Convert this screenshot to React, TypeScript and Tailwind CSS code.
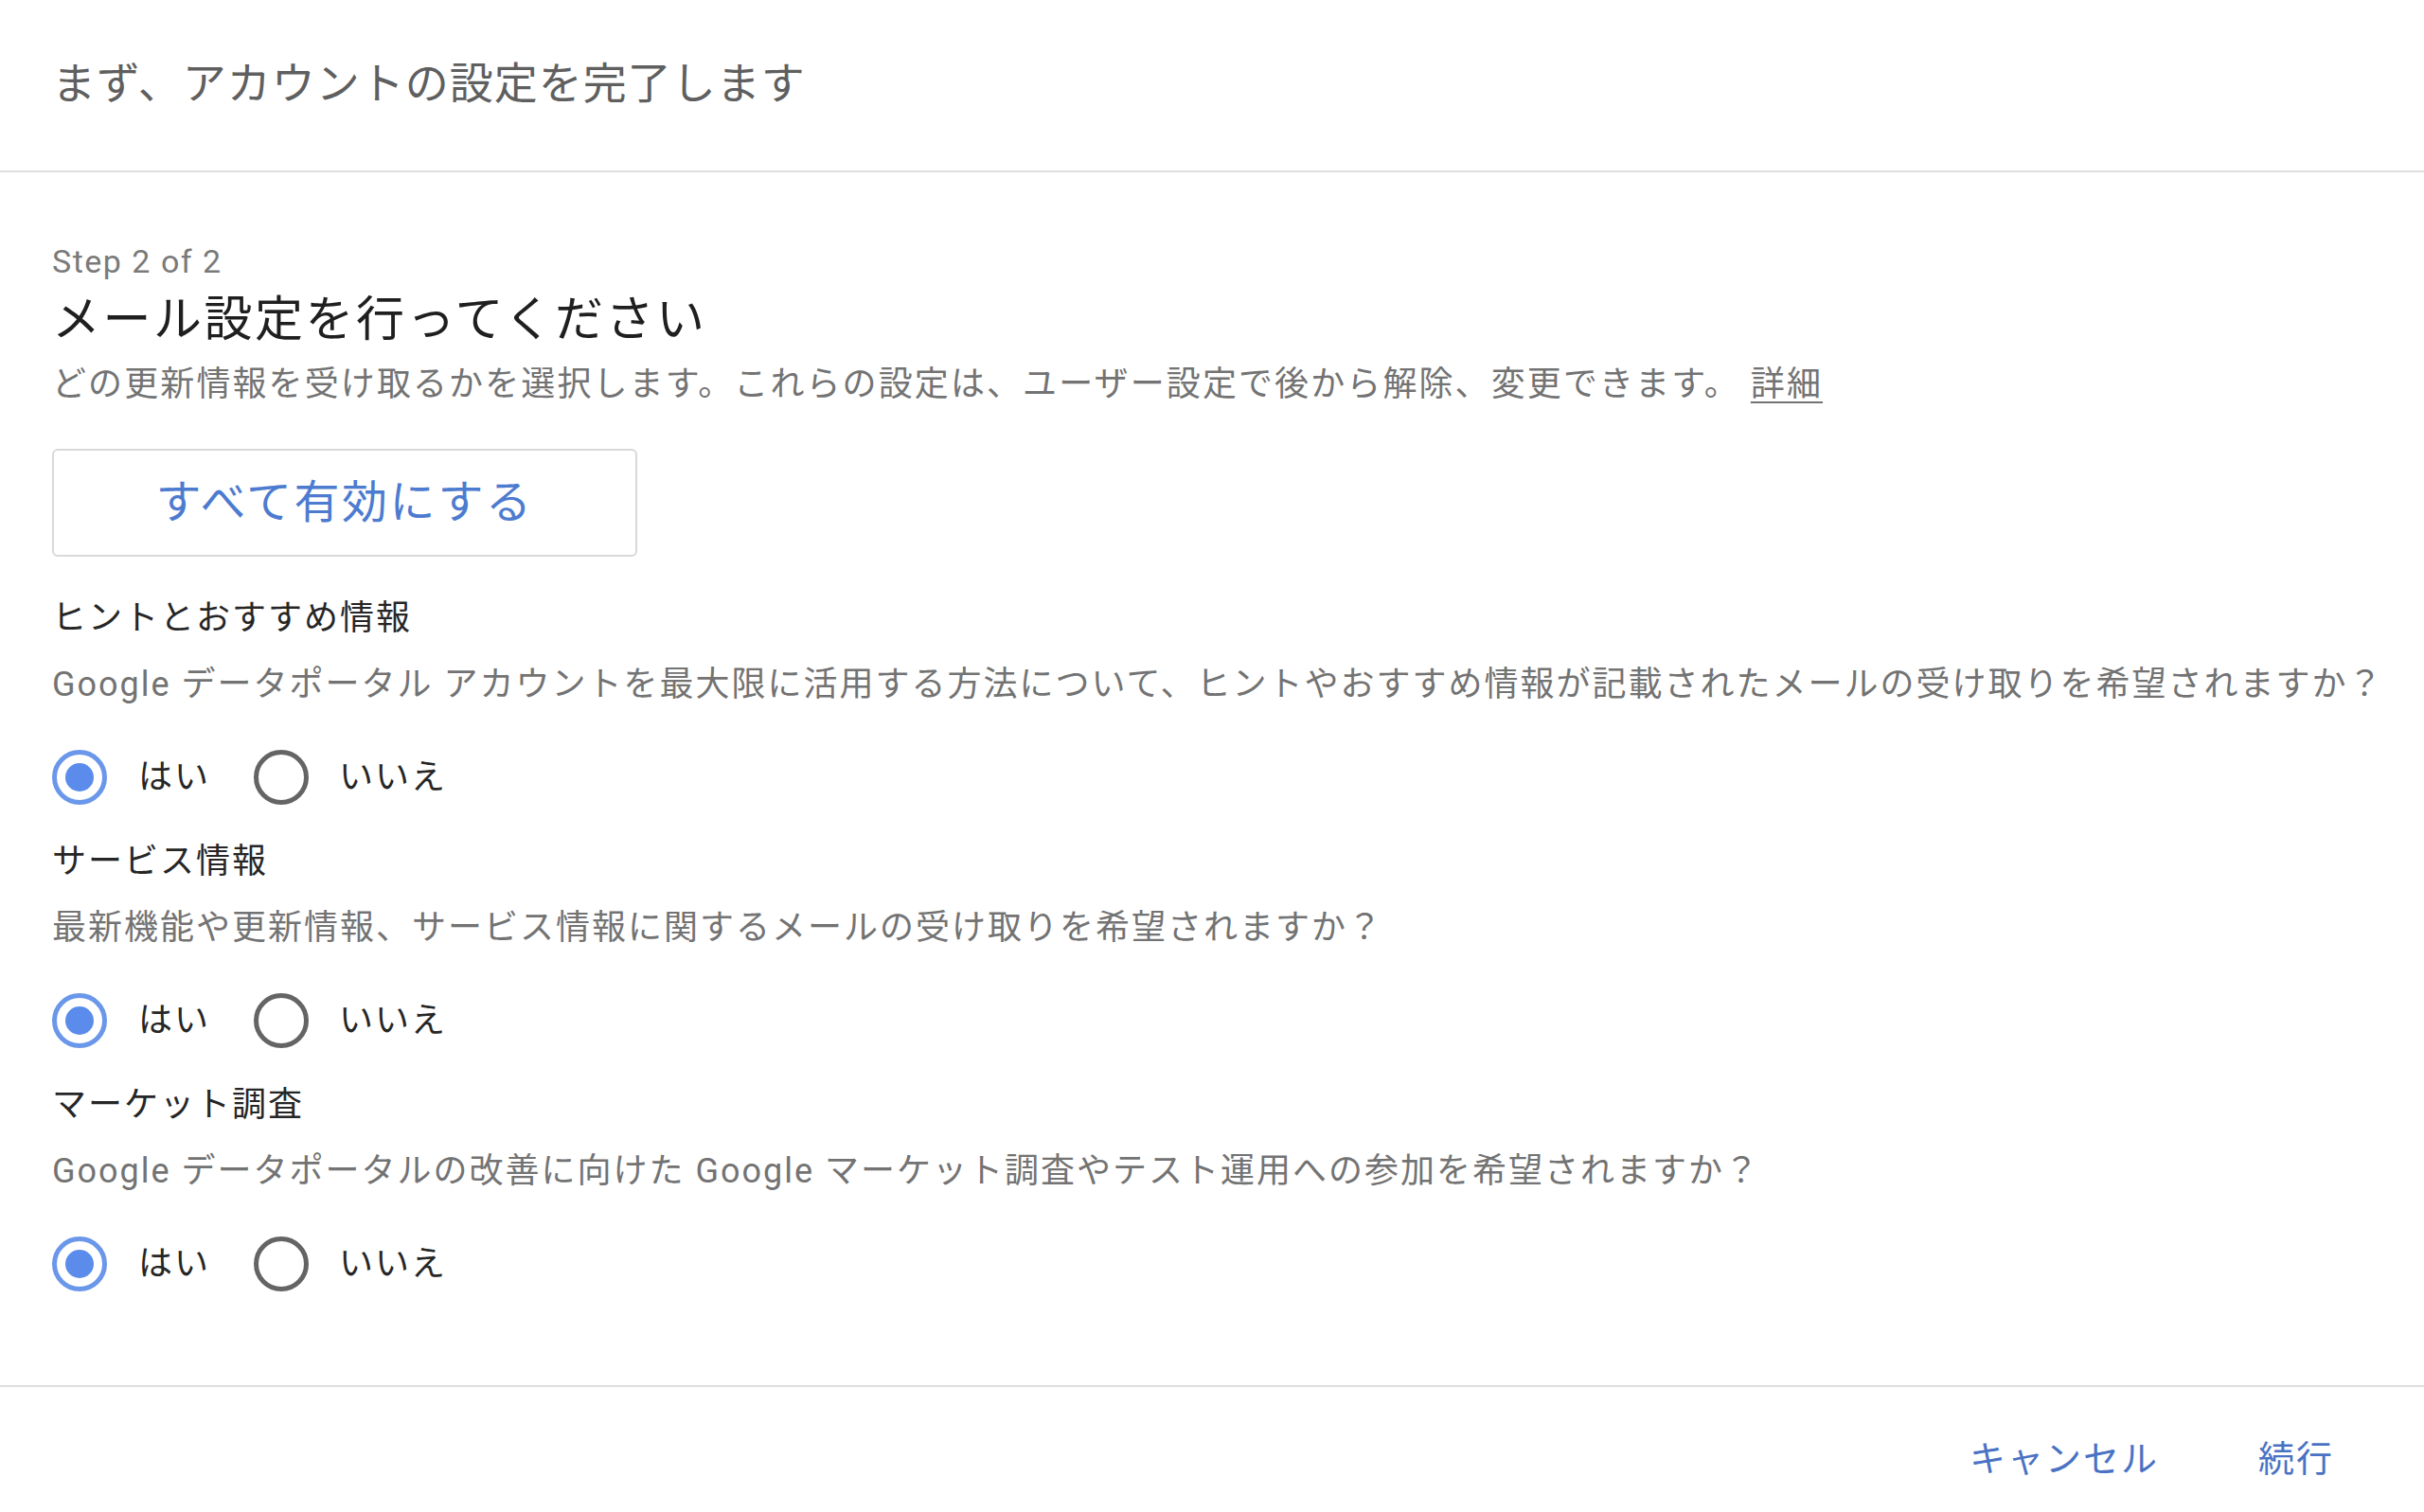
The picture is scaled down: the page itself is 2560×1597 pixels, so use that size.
import React from "react";

const font = { fontFamily: 'Roboto, "Noto Sans CJK JP", sans-serif' };

function Radio({ checked }: { checked: boolean }) {
  return checked ? (
    <div className="flex h-[58px] w-[58px] shrink-0 items-center justify-center rounded-full border-[5px] border-[#6a97ea]">
      <div className="h-[30px] w-[30px] rounded-full bg-[#5b8cec]" />
    </div>
  ) : (
    <div className="h-[58px] w-[58px] shrink-0 rounded-full border-[5px] border-[#646464]" />
  );
}

function Section({ title, desc }: { title: string; desc: string }) {
  return (
    <div className="flex flex-col">
      <div className="text-[36px] leading-[48px] tracking-[2px] text-[#262626]">{title}</div>
      <div className="mt-[22px] whitespace-nowrap text-[36px] leading-[48px] tracking-[2px] text-[#737373]">{desc}</div>
      <div className="mt-[44px] flex h-[60px] items-center">
        <Radio checked />
        <span className="ml-[33px] text-[36px] leading-[48px] tracking-[2px] text-[#262626]">はい</span>
        <div className="ml-[46px]">
          <Radio checked={false} />
        </div>
        <span className="ml-[32px] text-[36px] leading-[48px] tracking-[2px] text-[#262626]">いいえ</span>
      </div>
    </div>
  );
}

export default function App() {
  return (
    <div className="flex h-[1597px] w-[2560px] flex-col overflow-hidden bg-white" style={font}>
      <div className="flex h-[182px] shrink-0 items-center border-b-2 border-[#dedede] px-[55px] pb-[4px]">
        <span className="text-[46px] leading-[60px] tracking-[1px] text-[#5f5f5f]">
          まず、アカウントの設定を完了します
        </span>
      </div>

      <div className="flex flex-1 flex-col px-[55px] pt-[74px]">
        <div className="text-[34px] leading-[40px] tracking-[1.5px] text-[#7a7a7a]">Step 2 of 2</div>
        <div className="mt-[12px] text-[51px] leading-[60px] tracking-[2.5px] text-[#1f1f1f]">
          メール設定を行ってください
        </div>
        <div className="mt-[14px] whitespace-nowrap text-[36px] leading-[48px] tracking-[2.1px] text-[#737373]">
          どの更新情報を受け取るかを選択します。これらの設定は、ユーザー設定で後から解除、変更できます。{" "}
          <span className="underline underline-offset-[6px] decoration-2">詳細</span>
        </div>
        <div className="mt-[44px] flex h-[114px] w-[618px] items-center justify-center rounded-[6px] border-2 border-[#d9d9d9]">
          <span className="text-[48px] leading-[60px] tracking-[2.5px] text-[#4c7bcf]">すべて有効にする</span>
        </div>

        <div className="mt-[41px] flex flex-col gap-[35px]">
          <Section
            title="ヒントとおすすめ情報"
            desc="Google データポータル アカウントを最大限に活用する方法について、ヒントやおすすめ情報が記載されたメールの受け取りを希望されますか？"
          />
          <Section
            title="サービス情報"
            desc="最新機能や更新情報、サービス情報に関するメールの受け取りを希望されますか？"
          />
          <Section
            title="マーケット調査"
            desc="Google データポータルの改善に向けた Google マーケット調査やテスト運用への参加を希望されますか？"
          />
        </div>
      </div>

      <div className="flex h-[134px] shrink-0 justify-end gap-[105px] border-t-2 border-[#dedede] pr-[95px] pt-[52px]">
        <span className="text-[38px] leading-[48px] tracking-[2px] text-[#4a72c4]">キャンセル</span>
        <span className="text-[38px] leading-[48px] tracking-[2px] text-[#4a72c4]">続行</span>
      </div>
    </div>
  );
}
